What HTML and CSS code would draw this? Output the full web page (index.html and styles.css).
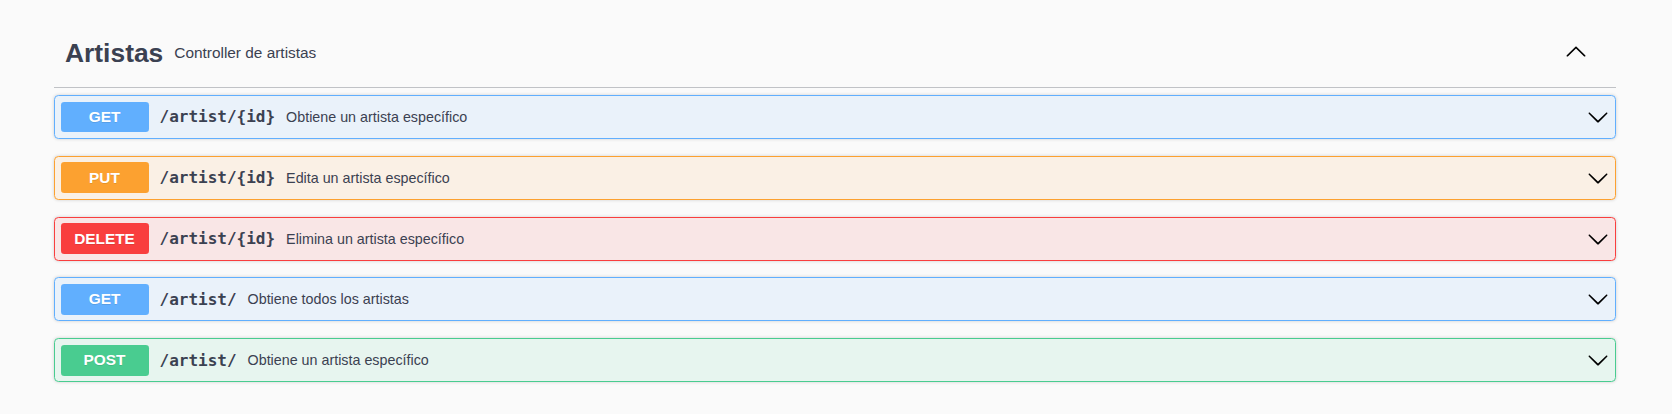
FILE: index.html
```html
<!DOCTYPE html>
<html lang="es">
<head>
<meta charset="utf-8">
<title>Artistas</title>
<link rel="stylesheet" href="styles.css">
</head>
<body>
<div class="page">
  <section class="tag-section">
    <div class="tag-header">
      <h3 class="tag-title">Artistas</h3>
      <small class="tag-desc">Controller de artistas</small>
      <button class="tag-toggle" type="button" aria-label="Colapsar">
        <svg viewBox="0 0 20 20" width="22" height="22"><path d="M17.418 14.908c.272.268.709.268.979 0s.271-.701 0-.969l-7.908-7.83c-.27-.268-.707-.268-.979 0l-7.908 7.83c-.27.268-.27.701 0 .969.271.268.709.268.979 0L10 7.767l7.418 7.141z"/></svg>
      </button>
    </div>
    <div class="ops">
      <div class="op op-get">
        <span class="method">GET</span>
        <span class="path">/artist/{id}</span>
        <span class="desc">Obtiene un artista específico</span>
        <svg class="arrow" viewBox="0 0 20 20" width="22" height="22"><path d="M17.418 6.109c.272-.268.709-.268.979 0s.271.701 0 .969l-7.908 7.83c-.27.268-.707.268-.979 0l-7.908-7.83c-.27-.268-.27-.701 0-.969.271-.268.709-.268.979 0L10 13.25l7.418-7.141z"/></svg>
      </div>
      <div class="op op-put">
        <span class="method">PUT</span>
        <span class="path">/artist/{id}</span>
        <span class="desc">Edita un artista específico</span>
        <svg class="arrow" viewBox="0 0 20 20" width="22" height="22"><path d="M17.418 6.109c.272-.268.709-.268.979 0s.271.701 0 .969l-7.908 7.83c-.27.268-.707.268-.979 0l-7.908-7.83c-.27-.268-.27-.701 0-.969.271-.268.709-.268.979 0L10 13.25l7.418-7.141z"/></svg>
      </div>
      <div class="op op-delete">
        <span class="method">DELETE</span>
        <span class="path">/artist/{id}</span>
        <span class="desc">Elimina un artista específico</span>
        <svg class="arrow" viewBox="0 0 20 20" width="22" height="22"><path d="M17.418 6.109c.272-.268.709-.268.979 0s.271.701 0 .969l-7.908 7.83c-.27.268-.707.268-.979 0l-7.908-7.83c-.27-.268-.27-.701 0-.969.271-.268.709-.268.979 0L10 13.25l7.418-7.141z"/></svg>
      </div>
      <div class="op op-get">
        <span class="method">GET</span>
        <span class="path">/artist/</span>
        <span class="desc">Obtiene todos los artistas</span>
        <svg class="arrow" viewBox="0 0 20 20" width="22" height="22"><path d="M17.418 6.109c.272-.268.709-.268.979 0s.271.701 0 .969l-7.908 7.83c-.27.268-.707.268-.979 0l-7.908-7.83c-.27-.268-.27-.701 0-.969.271-.268.709-.268.979 0L10 13.25l7.418-7.141z"/></svg>
      </div>
      <div class="op op-post">
        <span class="method">POST</span>
        <span class="path">/artist/</span>
        <span class="desc">Obtiene un artista específico</span>
        <svg class="arrow" viewBox="0 0 20 20" width="22" height="22"><path d="M17.418 6.109c.272-.268.709-.268.979 0s.271.701 0 .969l-7.908 7.83c-.27.268-.707.268-.979 0l-7.908-7.83c-.27-.268-.27-.701 0-.969.271-.268.709-.268.979 0L10 13.25l7.418-7.141z"/></svg>
      </div>
    </div>
  </section>
</div>
</body>
</html>
```
FILE: styles.css
```css
html, body {
  margin: 0;
  padding: 0;
  background: #fafafa;
}
body {
  font-family: "Liberation Sans", Arial, sans-serif;
  color: #3b4151;
}
.page {
  padding: 25px 56px 0 54px;
}
.tag-header {
  display: flex;
  align-items: center;
  padding: 11px 29px 17px 11px;
  border-bottom: 1px solid rgba(59, 65, 81, 0.3);
}
.tag-title {
  margin: 0;
  font-size: 26.4px;
  line-height: 34px;
  font-weight: 700;
  color: #3b4151;
}
.tag-desc {
  flex: 1;
  padding: 0 11px;
  font-size: 15.4px;
  font-weight: 400;
  color: #3b4151;
}
.tag-toggle {
  display: flex;
  padding: 0;
  margin: 0 0 4px 0;
  border: none;
  background: transparent;
  cursor: pointer;
}
.tag-toggle svg, .arrow {
  fill: #000;
  display: block;
}
.ops {
  padding-top: 7px;
}
.op {
  display: flex;
  align-items: center;
  padding: 5.5px;
  margin-bottom: 16.8px;
  border: 1px solid #000;
  border-radius: 4.4px;
  box-shadow: 0 0 3.3px rgba(0, 0, 0, 0.19);
}
.method {
  min-width: 88px;
  padding: 6.6px 0;
  line-height: 17.8px;
  font-size: 15.4px;
  font-weight: 700;
  text-align: center;
  color: #fff;
  border-radius: 3.3px;
  text-shadow: 0 1px 0 rgba(0, 0, 0, 0.1);
}
.path {
  padding: 0 11px;
  font-family: "DejaVu Sans Mono", "Liberation Mono", monospace;
  font-size: 16px;
  font-weight: 700;
  color: #3b4151;
}
.desc {
  flex: 1 1 auto;
  font-size: 14.3px;
  color: #3b4151;
}
.arrow {
  margin-right: 1px;
}
.op-get { background: rgba(97, 175, 254, 0.1); border-color: #61affe; }
.op-get .method { background: #61affe; }
.op-put { background: rgba(252, 161, 48, 0.1); border-color: #fca130; }
.op-put .method { background: #fca130; }
.op-delete { background: rgba(249, 62, 62, 0.1); border-color: #f93e3e; }
.op-delete .method { background: #f93e3e; }
.op-post { background: rgba(73, 204, 144, 0.1); border-color: #49cc90; }
.op-post .method { background: #49cc90; }
```
